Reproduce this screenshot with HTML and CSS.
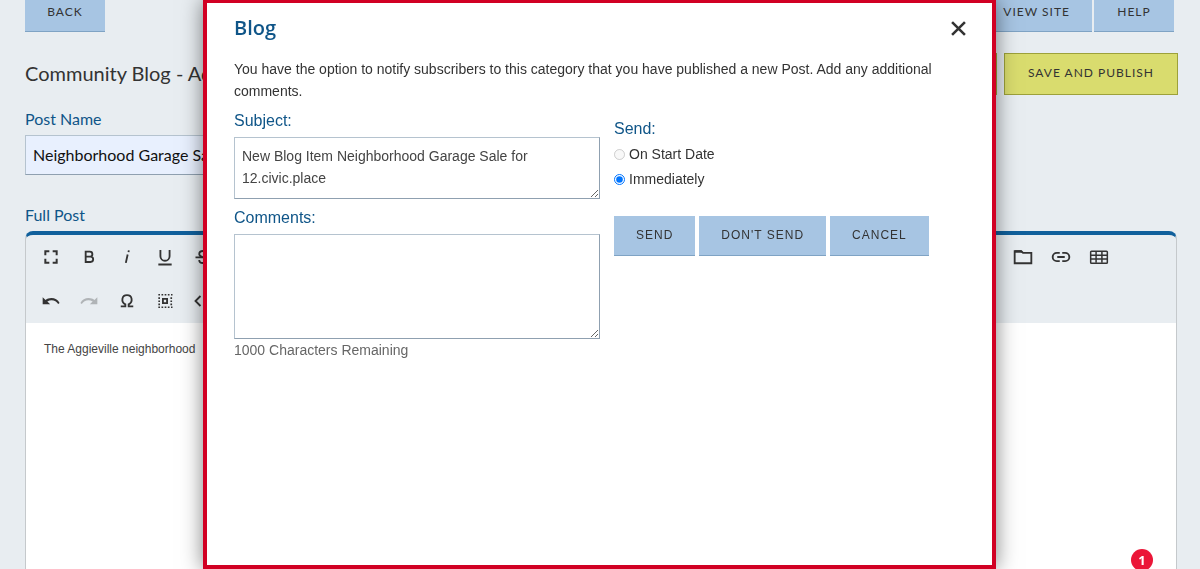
FILE: index.html
```html
<!DOCTYPE html>
<html lang="en">
<head>
  <meta charset="UTF-8" />
  <meta name="viewport" content="width=device-width, initial-scale=1.0" />
  <title>Community Blog</title>
  <link rel="stylesheet" href="styles.css">
</head>
<body>
  <div class="page">
    <div class="topbar">
      <button class="btn" type="button">Back</button>
      <div class="topbar-right">
        <button class="btn" type="button">View Site</button>
        <button class="btn" type="button">Help</button>
      </div>
    </div>

    <div class="page-header">
      <h1>Community Blog - Add</h1>
      <div class="save-buttons">
        <button class="btn-save" type="button">Save</button>
        <button class="btn-save" type="button">Save and Publish</button>
      </div>
    </div>

    <label class="field-label" for="postName">Post Name</label>
    <input class="post-name" type="text" id="postName" value="Neighborhood Garage Sale" />

    <h2 class="field-label">Full Post</h2>
    <div class="editor">
      <div class="toolbar">
        <div class="tools">
          <button type="button" aria-label="Fullscreen"><svg viewBox="0 0 24 24"><path d="M4 10V4h6v2.400H6.400V10zM14 4h6v6h-2.400V6.400H14zM4 14h2.400v3.600H10V20H4zM17.600 14H20v6h-6v-2.400h3.600z"/></svg></button>
          <button type="button" aria-label="Bold"><svg viewBox="0 0 24 24"><path class="line" d="M8 5.500h5a3 3 0 0 1 0 6.100H8zM8 11.600h5.800a3.200 3.200 0 0 1 0 6.400H8z"/></svg></button>
          <button type="button" aria-label="Italic"><svg viewBox="0 0 24 24"><path class="line" d="M12.800 9l-2.200 10M14.200 4l-.4 2.200"/></svg></button>
          <button type="button" aria-label="Underline"><svg viewBox="0 0 24 24"><path class="line" d="M6.500 3.500V11a5.500 5.500 0 0 0 11 0V3.500M4 21h16"/></svg></button>
          <button type="button" aria-label="Strikethrough"><svg viewBox="0 0 24 24"><path class="line" d="M3 12.500h18M16.500 8.500c0-5-9-5-9 0 0 2 2 3 4.500 4M7.500 15.500c0 5 9 5 9 0"/></svg></button>
        </div>
        <div class="tools">
          <button type="button" aria-label="File manager"><svg viewBox="0 0 24 24"><path class="line" d="M2 5h8l2 2h10v12.500H2z"/><path d="M2 4h8l2 3H2z"/></svg></button>
          <button type="button" aria-label="Insert link"><svg viewBox="0 0 24 24"><path class="line" d="M10.500 7H7a5 5 0 0 0 0 10h3.500M13.500 7H17a5 5 0 0 1 0 10h-3.500M7.500 12h9"/></svg></button>
          <button type="button" aria-label="Insert table"><svg viewBox="0 0 24 24"><rect class="thin" x="2" y="5" width="20" height="14.500" rx="1"/><path class="thin" d="M2 10h20M2 14.500h20M8.500 5v14M15.500 5v14"/></svg></button>
        </div>
      </div>
      <div class="toolbar">
        <div class="tools">
          <button type="button" aria-label="Undo"><svg viewBox="0 0 24 24"><path d="M12.500 8.500c-2.800 0-5 .9-7 2.200L2 7.500V16h9l-3.400-3.400c4.500-3 10.500-1.600 13 3l1.700-1.200C20.500 10.500 16.500 8.500 12.500 8.500z"/></svg></button>
          <button type="button" aria-label="Redo" disabled><svg viewBox="0 0 24 24"><path d="M11.500 8.500c2.800 0 5 .9 7 2.200L22 7.500V16h-9l3.400-3.400c-4.500-3-10.500-1.600-13 3l-1.700-1.200C3.500 10.500 7.500 8.500 11.500 8.500z"/></svg></button>
          <button type="button" aria-label="Special characters"><svg viewBox="0 0 24 24"><path class="line" d="M4.500 18.500H10v-2.500c-5.500-3-4.500-11 2-11s7.500 8 2 11v2.500h5.500"/></svg></button>
          <button type="button" aria-label="Select all"><svg viewBox="0 0 24 24"><path class="dots" d="M4 4.500h17M4 19.500h17"/><path class="dots" d="M5 7.500v10M19.500 7.500v10"/><path class="line" d="M9.500 9.500h5v5h-5z"/></svg></button>
          <button type="button" aria-label="Code view"><svg viewBox="0 0 24 24"><path class="line" d="M9 6l-6 6 6 6M15 6l6 6-6 6"/></svg></button>
        </div>
      </div>
      <div class="editor-body">The Aggieville neighborhood</div>
    </div>
  </div>

  <div class="badge">1</div>

  <div class="overlay">
    <div class="modal" role="dialog" aria-labelledby="modalTitle">
      <div class="modal-header">
        <h2 id="modalTitle">Blog</h2>
        <button class="close" type="button" aria-label="Close"><svg viewBox="0 0 14 14"><path d="M1 1l12 12M13 1l-12 12"/></svg></button>
      </div>
      <p class="intro">You have the option to notify subscribers to this category that you have published a new Post. Add any additional comments.</p>

      <form class="modal-form">
        <div class="message">
          <label for="subject">Subject:</label>
          <textarea id="subject" rows="2">New Blog Item Neighborhood Garage Sale for 12.civic.place</textarea>
          <label for="comments">Comments:</label>
          <textarea id="comments" rows="4"></textarea>
          <p class="remaining">1000 Characters Remaining</p>
        </div>
        <div class="send">
          <fieldset>
            <legend>Send:</legend>
            <label class="option"><input type="radio" name="when" disabled />On Start Date</label>
            <label class="option"><input type="radio" name="when" checked />Immediately</label>
          </fieldset>
          <div class="actions">
            <button class="btn" type="button">Send</button>
            <button class="btn" type="button">Don't Send</button>
            <button class="btn" type="button">Cancel</button>
          </div>
        </div>
      </form>
    </div>
  </div>
</body>
</html>
```

FILE: styles.css
```css
* {
  box-sizing: border-box;
}
body {
  margin: 0;
  height: 100vh;
  overflow: hidden;
  background: #e8edf1;
  color: #333;
  font-family: Lato, "Open Sans", sans-serif;
}
h1, h2, p {
  margin: 0;
}
.page {
  height: 100vh;
  display: flex;
  flex-direction: column;
  padding: 0 22px 0 25px;
}

/* top buttons */
.topbar, .page-header, .topbar-right, .save-buttons {
  display: flex;
  justify-content: space-between;
}
.topbar {
  margin-right: 4px;
}
.topbar-right {
  gap: 2px;
}
.btn {
  min-width: 80px;
  background: #a7c5e3;
  color: #333;
  border: none;
  border-bottom: 1px solid #7fa3c4;
  padding: 0 22px 7px;
  font-family: inherit;
  font-size: 12px;
  line-height: 24px;
  letter-spacing: 1px;
  text-transform: uppercase;
  cursor: pointer;
}
.page-header {
  margin-top: 21px;
}
.page-header h1 {
  font-size: 20px;
  font-weight: 400;
  line-height: 40px;
}
.save-buttons {
  gap: 7px;
}
.btn-save {
  background: #d9dc6e;
  color: #333;
  border: 1px solid #9da13a;
  padding: 0 23px 2px;
  font-family: inherit;
  font-size: 12px;
  line-height: 38px;
  letter-spacing: 1px;
  text-transform: uppercase;
  cursor: pointer;
}

/* post form */
.field-label {
  margin-top: 12px;
  color: #0f5588;
  font-size: 16px;
  font-weight: 400;
  line-height: 24px;
}
.post-name {
  width: 75%;
  height: 40px;
  margin: 4px 0 16px;
  padding: 0 7px 2px;
  background: #e8f0fe;
  border: 1px solid #b5c3cf;
  border-bottom-color: #8fa0b0;
  color: #111;
  font-family: inherit;
  font-size: 16px;
}
.editor {
  flex: 1;
  display: flex;
  flex-direction: column;
  margin: 4px 1px 0 0;
  border: 1px solid #c5c9cc;
  border-top: 4px solid #10609c;
  border-bottom: none;
  border-radius: 8px 8px 0 0;
}
.toolbar {
  display: flex;
  justify-content: space-between;
  padding: 0 58px 0 6px;
}
.tools {
  display: flex;
}
.tools button {
  display: flex;
  align-items: center;
  justify-content: center;
  width: 38px;
  height: 44px;
  padding: 0;
  border: none;
  background: none;
  color: #333;
}
.tools button:disabled {
  opacity: 0.3;
}
.tools svg {
  width: 20px;
  height: 20px;
  fill: currentColor;
}
.tools .line {
  fill: none;
  stroke: currentColor;
  stroke-width: 2.2;
}
.tools .thin {
  fill: none;
  stroke: currentColor;
  stroke-width: 1.8;
}
.tools .dots {
  fill: none;
  stroke: currentColor;
  stroke-width: 2;
  stroke-dasharray: 2 1.8;
}
.editor-body {
  flex: 1;
  padding: 16px 18px;
  background: #fff;
  color: #444;
  font-family: "Liberation Sans", Arial, sans-serif;
  font-size: 12px;
  line-height: 20px;
}
.badge {
  position: fixed;
  right: 47px;
  bottom: -2px;
  width: 22px;
  height: 22px;
  border-radius: 50%;
  background: #eb1638;
  color: #fff;
  font: bold 13px/22px "Open Sans", sans-serif;
  text-align: center;
}

/* notify dialog */
.overlay {
  position: fixed;
  inset: 0;
  display: flex;
  padding: 0 204px 0 203px;
}
.modal {
  flex: 1;
  padding: 11px 26px 0 27px;
  background: #fff;
  border: 4px solid #d10023;
  border-top-width: 3px;
  box-shadow: 0 0 20px rgba(0, 0, 0, 0.5);
  font-family: "Liberation Sans", Arial, sans-serif;
  font-size: 14px;
  line-height: 22px;
}
.modal-header {
  display: flex;
  justify-content: space-between;
  align-items: center;
}
.modal-header h2 {
  color: #0f5588;
  font-family: "Open Sans", sans-serif;
  font-size: 20px;
  font-weight: 600;
  line-height: 28px;
}
.close {
  display: flex;
  padding: 0;
  border: none;
  background: none;
  cursor: pointer;
}
.close svg {
  width: 15px;
  height: 15px;
  fill: none;
  stroke: #333;
  stroke-width: 2.4;
}
.intro {
  margin-top: 16px;
}
.modal-form {
  display: grid;
  grid-template-columns: 1fr 1fr;
}
.message label, .send legend {
  display: block;
  padding: 0;
  color: #0f5588;
  font-size: 16px;
  line-height: 24px;
}
.message label {
  margin: 7px 0 4px;
}
.message textarea {
  display: block;
  width: 100%;
  height: 62px;
  padding: 7px;
  border: 1px solid #8fa0b0;
  border-top-color: #b5c3cf;
  border-left-color: #b5c3cf;
  color: #444;
  font: inherit;
}
.message #comments {
  height: 105px;
}
.remaining {
  color: #666;
}
.send {
  padding: 15px 0 0 14px;
}
.send fieldset {
  margin: 0;
  padding: 0;
  border: none;
}
.send legend {
  margin-bottom: 1px;
}
.option {
  display: flex;
  align-items: center;
  gap: 4px;
  line-height: 25px;
}
.option input {
  width: 11px;
  height: 11px;
  margin: 0;
}
.actions {
  display: flex;
  gap: 4px;
  margin-top: 24px;
}
.actions .btn {
  padding: 7px 22px 8px;
}
```
